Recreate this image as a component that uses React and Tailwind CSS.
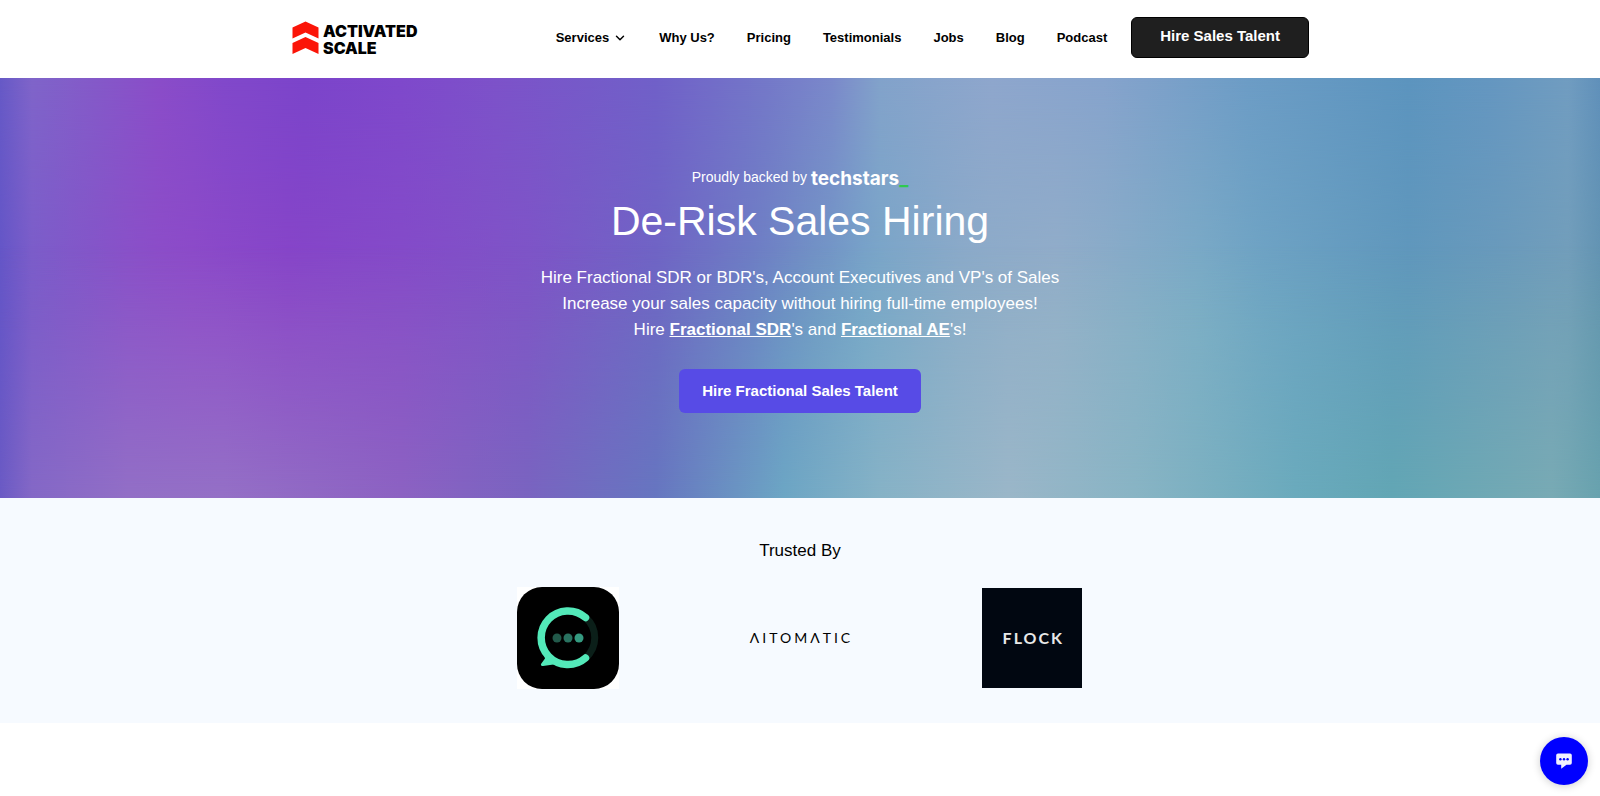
import { ChevronDown } from "lucide-react";

const navLinks = ["Why Us?", "Pricing", "Testimonials", "Jobs", "Blog", "Podcast"];

const Logo = () => {
    return (
        <a href="#home" className="flex items-start gap-1 text-black">
            <svg viewBox="0 0 27 34" className="w-[27px] h-[34px]" aria-hidden="true">
                <path d="M0.5 6.5 13.5 0.5 26.5 6.5V17.5L13.5 11.5 0.5 17.5Z" fill="#fb1508" />
                <path d="M0.5 22 13.5 16 26.5 22V33L13.5 27 0.5 33Z" fill="#fb1508" />
            </svg>
            <span className="flex flex-col pt-[2px] font-[Inter,sans-serif] text-base leading-[17px] font-black">
                <span>ACTIVATED</span>
                <span>SCALE</span>
            </span>
        </a>
    );
};

const Header = () => {
    return (
        <header className="bg-white">
            <div className="mx-auto flex max-w-[1024px] items-start justify-between pt-[17px] pr-[3px] pb-5 pl-1">
                <div className="pt-1">
                    <Logo />
                </div>
                <nav className="flex items-start text-[13px] leading-[41px] font-bold text-black">
                    <div className="flex items-center gap-8">
                        <button type="button" className="flex items-center gap-1">
                            Services
                            <ChevronDown className="h-[14px] w-[14px]" strokeWidth={2.5} />
                        </button>
                        {navLinks.map((link) => (
                            <a key={link} href="#nav">
                                {link}
                            </a>
                        ))}
                    </div>
                    <button
                        type="button"
                        className="ml-6 h-[41px] rounded-md border border-black bg-[#1f1f1f] px-7 pb-1 text-[15px] leading-5 text-white"
                    >
                        Hire Sales Talent
                    </button>
                </nav>
            </div>
        </header>
    );
};

// three horizontal colour bands that fade into each other from top to bottom
const HeroBackground = () => {
    return (
        <div className="absolute inset-0" aria-hidden="true">
            <div className="absolute inset-0 bg-[linear-gradient(90deg,#6455c8_0%,#7a5aca_2%,#8a50c9_8%,#8f4bc9_12%,#8b45c8_18%,#874cc8_25%,#8054c7_33%,#7066c4_41%,#6c80c4_47%,#6f98c4_51%,#74a6c8_54%,#8aacc8_60%,#94b0c8_66%,#7caec6_75%,#70a6c4_79%,#6299bc_88%,#6c9cba_94%,#739fb9_98%,#6596b0_100%)]" />
            <div className="absolute inset-0 bg-[linear-gradient(90deg,#6659c6_0%,#7f64c9_2%,#8459c8_6%,#8a4cc8_10%,#8148ca_14%,#7b44ca_19%,#7e48cb_25%,#7c52c9_31%,#7060c8_41%,#7478c8_48%,#7a88ca_52%,#82a2ca_55%,#8ea6cc_62%,#86a3cc_69%,#6c9cc5_78%,#5c94be_88%,#6496c0_93%,#709cc0_98%,#6090ba_100%)] [mask-image:linear-gradient(to_bottom,black,transparent_60%)]" />
            <div className="absolute inset-0 bg-[linear-gradient(90deg,#6a5ac4_0%,#8468c6_2%,#926fc6_8%,#9470c6_14%,#8c62c2_25%,#7964c0_33%,#6676c0_41%,#6a94c2_46%,#6ca6c4_49%,#86b2c6_55%,#9ab6c8_63%,#88b4c4_71%,#6aaabc_81%,#62a6b4_87%,#78aab4_97%,#68a2ae_100%)] [mask-image:linear-gradient(to_top,black,transparent_60%)]" />
        </div>
    );
};

const Hero = () => {
    return (
        <section className="relative">
            <HeroBackground />
            <div className="relative flex flex-col items-center px-4 pt-[87px] pb-[85px] text-center text-white">
                <div className="flex items-start gap-1 text-sm leading-6">
                    <span>Proudly backed by</span>
                    <span className="font-[Inter,sans-serif] text-[19px] leading-7 font-bold">
                        techstars<span className="text-[#2fc94f]">_</span>
                    </span>
                </div>
                <h1 className="text-[41px] leading-[56px]">De-Risk Sales Hiring</h1>
                <p className="mt-4 text-[17px] leading-[26px]">
                    Hire Fractional SDR or BDR's, Account Executives and VP's of Sales
                    <br />
                    Increase your sales capacity without hiring full-time employees!
                    <br />
                    Hire{" "}
                    <a href="#sdr" className="font-bold underline">
                        Fractional SDR
                    </a>
                    's and{" "}
                    <a href="#ae" className="font-bold underline">
                        Fractional AE
                    </a>
                    's!
                </p>
                <button
                    type="button"
                    className="mt-[26px] h-11 rounded-md bg-[#574be6] px-[23px] text-[15px] font-bold"
                >
                    Hire Fractional Sales Talent
                </button>
            </div>
        </section>
    );
};

const ChatLogo = () => {
    return (
        <svg viewBox="0 0 102 102" className="h-[102px] w-[102px]" role="img" aria-label="Chat app">
            <rect width="102" height="102" fill="#ffffff" />
            <rect width="102" height="102" rx="25" fill="#000000" />
            <path d="M68.5 30.5A26.8 26.8 0 0 1 68.5 71" fill="none" stroke="#0b1f19" strokeWidth="7" />
            <path d="M27 66 28 71.5 24 77Q23.5 79 26 79L40 77Z" fill="#53e9b9" />
            <path
                d="M68.5 30.5A26.8 26.8 0 1 0 68.5 71"
                fill="none"
                stroke="#53e9b9"
                strokeWidth="7.5"
                strokeLinecap="round"
            />
            <circle cx="40" cy="51" r="4.5" fill="#22594a" />
            <circle cx="51" cy="51" r="4.5" fill="#297260" />
            <circle cx="62" cy="51" r="4.5" fill="#349a80" />
        </svg>
    );
};

const TrustedBy = () => {
    return (
        <section className="bg-[#f6faff] px-4 pt-10 pb-[34px]">
            <h2 className="text-center text-[17px] leading-[26px] text-black">Trusted By</h2>
            <div className="mx-auto mt-[23px] grid max-w-[697px] grid-cols-3 items-center justify-items-center">
                <ChatLogo />
                <span className="pl-[3px] font-[Lato,sans-serif] text-sm tracking-[3px] text-black">
                    ΛITOMΛTIC
                </span>
                <div className="flex h-[100px] w-[100px] items-center justify-center bg-[#010711] pl-[2px] font-[Lato,sans-serif] text-base font-bold tracking-[2px] text-[#e8e8e8]">
                    FLOCK
                </div>
            </div>
        </section>
    );
};

const ChatButton = () => {
    return (
        <button
            type="button"
            aria-label="Open chat"
            className="fixed right-3 bottom-[11px] flex h-12 w-12 items-center justify-center rounded-full bg-[#0000ff] shadow-[0_1px_8px_rgba(0,0,0,0.2)]"
        >
            <svg viewBox="0 0 16 16" className="h-4 w-4" aria-hidden="true">
                <path d="M2 0.5H14A1.8 1.8 0 0 1 15.8 2.3V10A1.8 1.8 0 0 1 14 11.8H10.5L5.2 15.8V11.8H2A1.8 1.8 0 0 1 0.2 10V2.3A1.8 1.8 0 0 1 2 0.5Z" fill="#f1f1ff" />
                <circle cx="4.4" cy="6.2" r="1.2" fill="#0000ff" />
                <circle cx="8" cy="6.2" r="1.2" fill="#0000ff" />
                <circle cx="11.6" cy="6.2" r="1.2" fill="#0000ff" />
            </svg>
        </button>
    );
};

const App = () => {
    return (
        <div className="min-h-screen bg-white font-['Liberation_Sans',Arial,sans-serif]">
            <Header />
            <main>
                <Hero />
                <TrustedBy />
            </main>
            <ChatButton />
        </div>
    );
};

export default App;
